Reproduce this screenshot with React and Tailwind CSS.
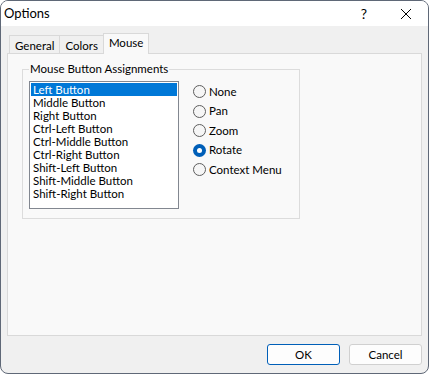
import React, { useState } from 'react';

const items = [
  'Left Button',
  'Middle Button',
  'Right Button',
  'Ctrl-Left Button',
  'Ctrl-Middle Button',
  'Ctrl-Right Button',
  'Shift-Left Button',
  'Shift-Middle Button',
  'Shift-Right Button',
];

const actions = ['None', 'Pan', 'Zoom', 'Rotate', 'Context Menu'];

function Radio({ checked }) {
  if (checked) {
    return (
      <span className="w-[13px] h-[13px] rounded-full bg-[#005fb8] flex items-center justify-center shrink-0">
        <span className="w-[5px] h-[5px] rounded-full bg-white" />
      </span>
    );
  }
  return <span className="w-[13px] h-[13px] rounded-full border border-[#5e5e5e] bg-[#f6f6f6] shrink-0" />;
}

export default function App() {
  const [tab] = useState('Mouse');
  const [sel, setSel] = useState(0);
  const [action, setAction] = useState('Rotate');

  return (
    <div className="w-[429px] h-[374px] bg-white" style={{ fontFamily: 'Lato, "Noto Sans", sans-serif' }}>
      <div className="w-full h-full flex flex-col bg-[#f0f0f0] border border-[#5f6877] rounded-[8px] overflow-hidden text-[11.5px] text-black">
        {/* title bar */}
        <div className="h-[25px] bg-white flex items-center shrink-0">
          <span className="pl-[3px] text-[13px] leading-none">Options</span>
          <span className="ml-auto w-[24px] text-center text-[14px]">?</span>
          <span className="w-[44px] flex justify-center ml-[8px]">
            <svg width="12" height="12" viewBox="0 0 12 12">
              <path d="M1 1L11 11M11 1L1 11" stroke="#000" strokeWidth="1" />
            </svg>
          </span>
        </div>

        <div className="flex flex-col px-[6px] pt-[7px]">
          {/* tabs */}
          <div className="flex items-end h-[20px] pl-[2px] relative z-10">
            {['General', 'Colors', 'Mouse'].map((t) =>
              t === tab ? (
                <div key={t} className="h-[21px] -mb-[1px] px-[5px] pt-[1px] bg-[#f9f9f9] border border-b-0 border-[#d9d9d9] leading-[16px]">
                  {t}
                </div>
              ) : (
                <div key={t} className="h-[18px] px-[5px] pt-[2px] bg-[#f0f0f0] border border-b-0 border-r-0 border-[#d9d9d9] leading-[16px]">
                  {t}
                </div>
              )
            )}
          </div>

          {/* panel */}
          <div className="h-[283px] bg-[#f9f9f9] border border-[#d9d9d9] pl-[14px] pt-[8px]">
            <fieldset className="w-[278px] h-[157px] border border-[#dcdcdc] px-[6px] pb-[10px] flex gap-[14px]">
              <legend className="px-[1px] leading-[14px]">Mouse Button Assignments</legend>
              <div className="w-[150px] h-[128px] mt-[5px] border border-[#828790] bg-white px-[1px] pt-[1px] shrink-0">
                {items.map((it, i) => (
                  <div
                    key={it}
                    onClick={() => setSel(i)}
                    className={`h-[13px] leading-[13px] pl-[2px] ${i === sel ? 'bg-[#0078d7] text-white' : ''}`}
                  >
                    {it}
                  </div>
                ))}
              </div>
              <div className="flex flex-col gap-[6.5px] pt-[9px]">
                {actions.map((a) => (
                  <label key={a} onClick={() => setAction(a)} className="flex items-center gap-[3px] h-[13px]">
                    <Radio checked={a === action} />
                    <span className="leading-none">{a}</span>
                  </label>
                ))}
              </div>
            </fieldset>
          </div>

          {/* buttons */}
          <div className="flex justify-end gap-[9px] mt-[8px]">
            <button className="w-[73px] h-[21px] rounded-[3px] border border-[#005fb8] bg-[#fdfdfd] leading-none">OK</button>
            <button className="w-[73px] h-[21px] rounded-[3px] border border-[#d0d0d0] bg-[#fdfdfd] leading-none">Cancel</button>
          </div>
        </div>
      </div>
    </div>
  );
}
